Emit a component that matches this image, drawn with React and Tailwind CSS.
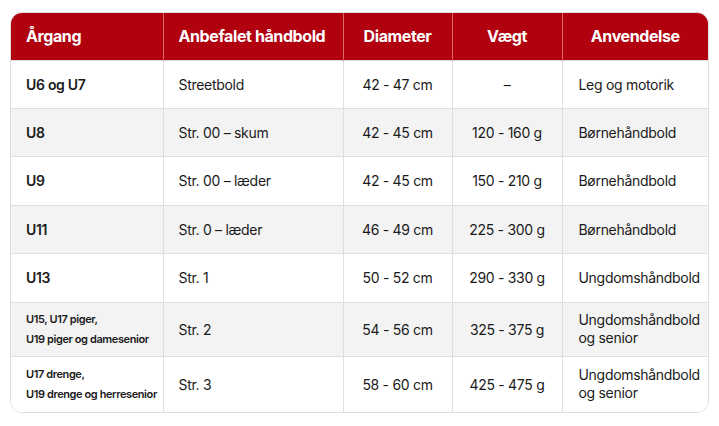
import React from "react";

const rows = [
  { age: "U6 og U7", ball: "Streetbold", dia: "42 - 47 cm", weight: "–", use: "Leg og motorik", h: "h-[48px]" },
  { age: "U8", ball: "Str. 00 – skum", dia: "42 - 45 cm", weight: "120 - 160 g", use: "Børnehåndbold", h: "h-[48px]" },
  { age: "U9", ball: "Str. 00 – læder", dia: "42 - 45 cm", weight: "150 - 210 g", use: "Børnehåndbold", h: "h-[49px]" },
  { age: "U11", ball: "Str. 0 – læder", dia: "46 - 49 cm", weight: "225 - 300 g", use: "Børnehåndbold", h: "h-[48px]" },
  { age: "U13", ball: "Str. 1", dia: "50 - 52 cm", weight: "290 - 330 g", use: "Ungdomshåndbold", h: "h-[49px]" },
  { age: ["U15, U17 piger,", "U19 piger og damesenior"], ball: "Str. 2", dia: "54 - 56 cm", weight: "325 - 375 g", use: ["Ungdomshåndbold", "og senior"], h: "h-[54px]" },
  { age: ["U17 drenge,", "U19 drenge og herresenior"], ball: "Str. 3", dia: "58 - 60 cm", weight: "425 - 475 g", use: ["Ungdomshåndbold", "og senior"], h: "h-[56px]" },
];

export default function App() {
  return (
    <div className="w-[719px] h-[426px] bg-white pt-[12px] pl-[10px] font-['Inter',sans-serif] text-[#1a1a1a]">
      <div className="w-[699px] rounded-xl border border-[#dedede] overflow-hidden">
        <table className="w-full table-fixed border-collapse">
          <colgroup>
            <col className="w-[152px]" />
            <col className="w-[180px]" />
            <col className="w-[109px]" />
            <col className="w-[110px]" />
            <col />
          </colgroup>
          <thead>
            <tr className="h-[47px] bg-[#b1000e] text-white text-[16px] font-semibold tracking-[-0.4px] whitespace-nowrap">
              <th className="text-left pl-[15px] border-r border-[#d96a6a]">Årgang</th>
              <th className="text-left pl-[15px] border-r border-[#d96a6a]">Anbefalet håndbold</th>
              <th className="text-center border-r border-[#d96a6a]">Diameter</th>
              <th className="text-center border-r border-[#d96a6a]">Vægt</th>
              <th className="text-center">Anvendelse</th>
            </tr>
          </thead>
          <tbody className="text-[14px] tracking-[-0.3px] whitespace-nowrap">
            {rows.map((r, i) => (
              <tr key={i} className={`${r.h} ${i % 2 ? "bg-[#f3f3f3]" : "bg-white"} border-t border-[#dfdfdf]`}>
                <td className="pl-[15px] font-semibold border-r border-[#dfdfdf]">
                  {Array.isArray(r.age) ? (
                    <div className="text-[11px] leading-[20px] tracking-[-0.4px]">
                      {r.age.map((t) => (
                        <div key={t}>{t}</div>
                      ))}
                    </div>
                  ) : (
                    r.age
                  )}
                </td>
                <td className="pl-[15px] border-r border-[#dfdfdf]">{r.ball}</td>
                <td className="text-center border-r border-[#dfdfdf]">{r.dia}</td>
                <td className="text-center border-r border-[#dfdfdf]">{r.weight}</td>
                <td className="pl-[16px]">
                  {Array.isArray(r.use) ? (
                    <div className="leading-[18px]">
                      {r.use.map((t) => (
                        <div key={t}>{t}</div>
                      ))}
                    </div>
                  ) : (
                    r.use
                  )}
                </td>
              </tr>
            ))}
          </tbody>
        </table>
      </div>
    </div>
  );
}
